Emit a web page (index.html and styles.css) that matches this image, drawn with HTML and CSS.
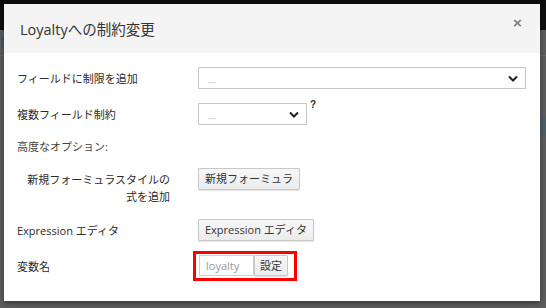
FILE: index.html
```html
<!DOCTYPE html>
<html lang="ja">
<head>
<meta charset="utf-8">
<link rel="stylesheet" href="styles.css">
</head>
<body>
<div class="page">
  <div class="topbar"></div>
  <div class="page-body">
    <div class="ghost-tab">N</div>
    <div class="ghost-line"></div>
    <div class="ghost-row"></div>
  </div>
</div>
<div class="modal">
  <div class="modal-header">
    <h1 class="modal-title">Loyaltyへの制約変更</h1>
    <span class="close">×</span>
  </div>
  <div class="modal-body">
    <div class="row row-select">
      <div class="label">フィールドに制限を追加</div>
      <div class="field">
        <div class="select select-wide"><span class="ph">...</span><svg class="chev" viewBox="0 0 10 7"><path d="M1 1.5 L5 5.5 L9 1.5" fill="none" stroke="#222" stroke-width="2"/></svg></div>
      </div>
    </div>
    <div class="row row-select">
      <div class="label">複数フィールド制約</div>
      <div class="field">
        <div class="select select-narrow"><span class="ph">...</span><svg class="chev" viewBox="0 0 10 7"><path d="M1 1.5 L5 5.5 L9 1.5" fill="none" stroke="#222" stroke-width="2"/></svg></div>
        <span class="help">?</span>
      </div>
    </div>
    <div class="row row-heading">
      <div class="label">高度なオプション:</div>
    </div>
    <div class="row row-formula">
      <div class="label label-right">新規フォーミュラスタイルの<br>式を追加</div>
      <div class="field field-top"><button class="btn">新規フォーミュラ</button></div>
    </div>
    <div class="row row-expr">
      <div class="label">Expression エディタ</div>
      <div class="field"><button class="btn">Expression エディタ</button></div>
    </div>
    <div class="row row-var">
      <div class="label">変数名</div>
      <div class="field">
        <div class="highlight">
          <input class="input" type="text" value="loyalty">
          <button class="btn btn-set">設定</button>
        </div>
      </div>
    </div>
  </div>
</div>
</body>
</html>
```

FILE: styles.css
```css
* { box-sizing: border-box; }
html, body { margin: 0; padding: 0; }
body {
  width: 546px;
  height: 308px;
  overflow: hidden;
  background: #5b5b5b;
  font-family: "Open Sans", "Noto Sans CJK JP", sans-serif;
  color: #333;
  position: relative;
}
.page { width: 546px; height: 308px; }
.topbar { height: 30px; background: #0d0d0d; }
.page-body { position: relative; height: 278px; background: #5e5e5e; }
.ghost-tab { position: absolute; left: 0; top: 3px; color: #3d5a74; font-size: 14px; font-family: "Open Sans", sans-serif; }
.ghost-line { position: absolute; left: 0; right: 0; top: 25px; height: 1px; background: #6c6c6c; }
.ghost-row { position: absolute; right: 0; width: 8px; top: 87px; height: 18px; background: #4f6068; }

.modal {
  position: absolute;
  left: 4px;
  top: 4px;
  width: 536px;
  height: 297px;
  background: #fff;
  box-shadow: 0 2px 6px rgba(0,0,0,0.45);
}
.modal-header {
  height: 49px;
  background: #f4f4f4;
  display: flex;
  align-items: center;
  justify-content: space-between;
  padding: 0 17px 2px 16px;
}
.modal-title {
  margin: 0;
  font-size: 14.5px;
  font-weight: 400;
  color: #333;
  padding-top: 2px;
}
.close {
  font-size: 13px;
  font-weight: 700;
  color: #777;
  margin-top: -10px;
  font-family: "DejaVu Sans", sans-serif;
}
.modal-body {
  padding: 14px 0 0 13px;
  display: flex;
  flex-direction: column;
}
.row {
  display: grid;
  grid-template-columns: 181px 1fr;
  align-items: center;
}
.label { font-size: 11px; color: #2b2b2b; }
.row-select { height: 22px; margin-bottom: 14px; }
.row-heading { height: 20px; margin-top: -3px; margin-bottom: 12px; }
.row-heading .label { color: #444; }
.row-formula { align-items: start; height: 40px; margin-bottom: 11px; }
.label-right { text-align: right; width: 153px; line-height: 17px; padding-top: 3px; }
.row-expr { height: 21px; margin-bottom: 11px; }
.row-var { height: 30px; }

.field { display: flex; align-items: flex-start; }
.select {
  height: 22px;
  border: 1px solid #c8c8c8;
  display: flex;
  align-items: center;
  justify-content: space-between;
  padding: 0 7px 0 9px;
  background: #fff;
}
.select-wide { width: 328px; }
.select-narrow { width: 109px; }
.ph { font-size: 9px; color: #999; letter-spacing: 0.5px; padding-top: 3px; }
.chev { width: 10px; height: 7px; }
.help { font-size: 10px; font-weight: 700; color: #333; margin-left: 3px; margin-top: -4px; font-family: "Liberation Sans", sans-serif; }

.btn {
  font-family: "Open Sans", "Noto Sans CJK JP", sans-serif;
  font-size: 11px;
  color: #333;
  height: 22px;
  padding: 0 6px;
  background: linear-gradient(#f7f7f7, #ececec);
  border: 1px solid #c9c9c9;
  border-radius: 1px;
  box-shadow: 0 1px 1px rgba(0,0,0,0.12);
  line-height: 18px;
}
.highlight {
  display: flex;
  align-items: center;
  border: 3px solid #ff0000;
  margin-left: -5px;
  padding: 1px 6px 2px 3px;
  height: 30px;
}
.input {
  width: 55px;
  height: 21px;
  border: 1px solid #cfcfcf;
  padding: 0 0 0 6px;
  font-family: "Open Sans", sans-serif;
  font-size: 11px;
  color: #999;
  outline: none;
}
.btn-set { height: 21px; padding: 0 5px; }
```
